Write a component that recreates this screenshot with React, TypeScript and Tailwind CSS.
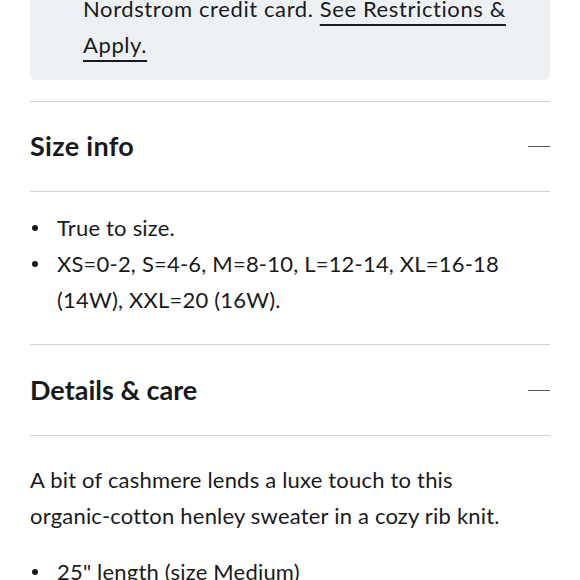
function Bullet() {
  return (
    <span className="flex h-[36px] w-[27px] shrink-0 items-center">
      <span className="ml-[2px] h-[6px] w-[6px] rounded-full bg-[#191a1b]" />
    </span>
  );
}

export default function App() {
  const font = { fontFamily: "Lato, 'Open Sans', sans-serif" };
  return (
    <div className="w-[580px] h-[580px] overflow-hidden bg-white text-[#191a1b] tracking-[0.2px]" style={font}>
      <div className="px-[30px]">
        <div className="-mt-[45px] rounded-b-[6px] bg-[#eef1f4] pl-[53px] pr-[20px] pb-[17px] text-[22px] leading-[36px]">
          <p className="tracking-[0.6px]">
            Earn 3X the points when you use a
            <br />
            Nordstrom credit card.{" "}
            <a className="underline underline-offset-[7px] decoration-[1.5px]">
              See Restrictions &amp;
              <br />
              Apply.
            </a>
          </p>
        </div>
        <div className="mt-[21px] border-t border-[#d1d4d7]" />
        <div className="flex h-[89px] items-center justify-between">
          <h2 className="text-[27px] font-bold tracking-[0.3px]">Size info</h2>
          <div className="h-px w-[22px] bg-[#55575a]" />
        </div>
        <div className="border-t border-[#d1d4d7]" />
        <ul className="pt-[18px] pb-[26px] text-[22px] leading-[36px]">
          <li className="flex">
            <Bullet />
            <span>True to size.</span>
          </li>
          <li className="flex">
            <Bullet />
            <span>
              XS=0-2, S=4-6, M=8-10, L=12-14, XL=16-18
              <br />
              (14W), XXL=20 (16W).
            </span>
          </li>
        </ul>
        <div className="border-t border-[#d1d4d7]" />
        <div className="flex h-[90px] items-center justify-between">
          <h2 className="text-[27px] font-bold tracking-[0px]">Details &amp; care</h2>
          <div className="h-px w-[22px] bg-[#55575a]" />
        </div>
        <div className="border-t border-[#d1d4d7]" />
        <p className="pt-[26px] text-[22px] leading-[36px]">
          A bit of cashmere lends a luxe touch to this
          <br />
          organic-cotton henley sweater in a cozy rib knit.
        </p>
        <ul className="pt-[20px] text-[22px] leading-[36px]">
          <li className="flex">
            <Bullet />
            <span>25" length (size Medium)</span>
          </li>
        </ul>
      </div>
    </div>
  );
}
